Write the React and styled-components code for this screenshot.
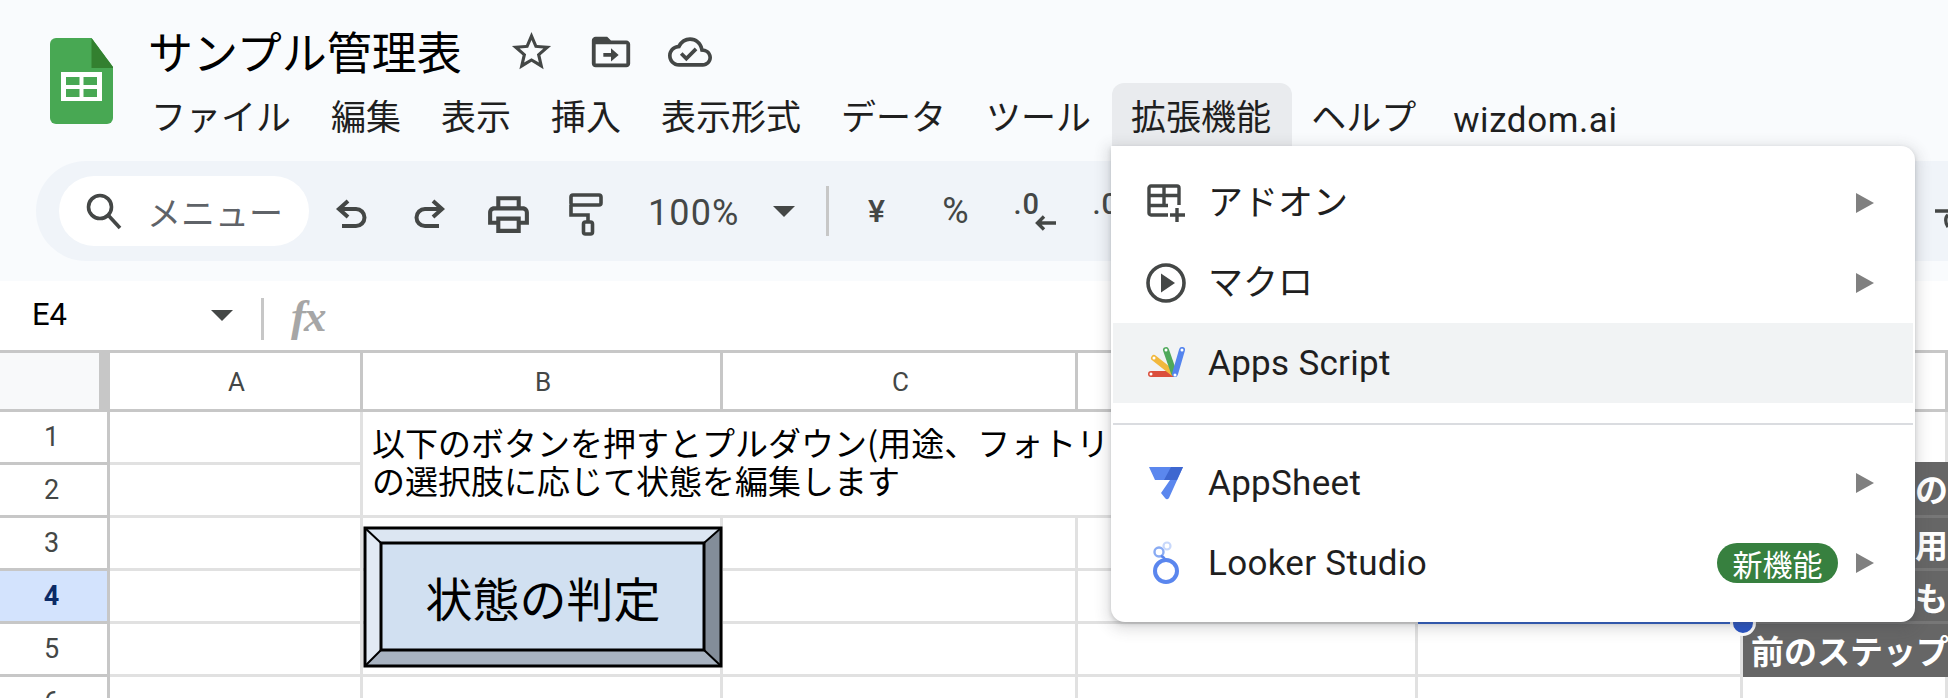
import React from 'react';
import styled, { createGlobalStyle } from 'styled-components';

const CJK = '"Noto Sans CJK JP", "Noto Sans", sans-serif';
const UI = 'Roboto, "Noto Sans CJK JP", sans-serif';
const ICON = '#444746';

const GlobalStyle = createGlobalStyle`
  html, body {
    margin: 0;
    background: #fff;
    overflow: hidden;
  }
`;

const Page = styled.div`
  position: relative;
  width: 1948px;
  height: 698px;
  overflow: hidden;
  font-family: ${CJK};
  color: #1f1f1f;
`;

const Header = styled.header`
  height: 281px;
  background: #f9fbfd;
  box-sizing: border-box;
`;

const TopBar = styled.div`
  display: flex;
  align-items: flex-start;
  height: 161px;
  padding-left: 50px;
  box-sizing: border-box;
`;

const LogoWrap = styled.div`
  margin-top: 38px;
  width: 63px;
  height: 86px;
  flex: none;
`;

const TitleColumn = styled.div`
  margin-left: 19px;
  display: flex;
  flex-direction: column;
`;

const TitleRow = styled.div`
  display: flex;
  align-items: center;
  height: 83px;
  padding: 20px 0 0 16px;
  box-sizing: border-box;
`;

const Title = styled.h1`
  margin: 0;
  font-size: 45px;
  font-weight: 400;
  line-height: 56px;
  color: #000;
  width: 360px;
  margin-top: -2px;
`;

const TitleIcon = styled.span`
  display: flex;
  width: ${(p) => p.$w}px;
  margin-top: 0;
`;

const MenuBar = styled.nav`
  display: flex;
  height: 63px;
`;

const MenuItem = styled.div`
  display: flex;
  align-items: center;
  height: 63px;
  padding: 0 21px 0 19px;
  font-size: 35px;
  line-height: 1;
  white-space: nowrap;
  border-radius: 12px 12px 0 0;
  padding-top: ${(p) => (p.$latin ? 12 : 0)}px;
  box-sizing: border-box;
  background: ${(p) => (p.$active ? '#e9ebee' : 'transparent')};
  font-family: ${(p) => (p.$latin ? UI : CJK)};
  ${(p) => p.$latin && 'font-size: 35px; letter-spacing: 0.6px; margin-left: -3px;'}
`;

const Toolbar = styled.div`
  display: flex;
  align-items: center;
  height: 100px;
  margin-left: 36px;
  padding-left: 23px;
  background: #f0f4f9;
  border-radius: 50px 0 0 50px;
  color: ${ICON};
  font-family: ${UI};
`;

const SearchPill = styled.div`
  display: flex;
  align-items: center;
  width: 250px;
  height: 70px;
  padding-left: 26px;
  gap: 24px;
  box-sizing: border-box;
  background: #fff;
  border-radius: 35px;
  font-family: ${CJK};
  font-size: 34px;
  color: #5f6368;
  margin-right: 2px;
  white-space: nowrap;
  overflow: hidden;
`;

const ToolButton = styled.div`
  display: flex;
  align-items: center;
  justify-content: center;
  flex: none;
  width: ${(p) => p.$w || 79}px;
  height: 60px;
  padding-top: ${(p) => p.$down || 0}px;
  box-sizing: border-box;
  font-size: ${(p) => p.$size || 32}px;
  font-weight: ${(p) => p.$weight || 500};
`;

const Zoom = styled.div`
  display: flex;
  align-items: center;
  flex: none;
  margin-left: 21px;
  padding-top: 4px;
  width: 125px;
  font-size: 36px;
  letter-spacing: 1.1px;
`;

const Caret = styled.span`
  flex: none;
  width: 0;
  height: 0;
  border-left: 11px solid transparent;
  border-right: 11px solid transparent;
  border-top: 11px solid ${ICON};
`;

const ToolDivider = styled.span`
  flex: none;
  width: 3px;
  height: 50px;
  background: #c7c7c7;
  margin: 0 8px 0 31px;
`;

const Decimal = styled.span`
  position: relative;
  display: block;
  width: 42px;
  height: 42px;
  font-size: 29px;
  font-weight: 500;
  line-height: 28px;
  letter-spacing: 1px;
`;

const DecimalArrow = styled.svg`
  position: absolute;
  left: 21px;
  top: 25px;
`;

const EdgeIcon = styled.span`
  display: flex;
  margin-left: auto;
  margin-top: 14px;
`;

const FormulaBar = styled.div`
  display: flex;
  align-items: center;
  height: 69px;
  padding-left: 32px;
  box-sizing: border-box;
  background: #fff;
`;

const CellName = styled.div`
  width: 179px;
  font-family: ${UI};
  font-size: 31px;
  color: #000;
  margin-top: -3px;
`;

const Divider = styled.span`
  width: 3px;
  height: 42px;
  margin: 6px 27px 0 28px;
  background: #c7c7c7;
`;

const Fx = styled.span`
  font-family: "Liberation Serif", serif;
  font-style: italic;
  font-weight: 700;
  font-size: 45px;
  line-height: 45px;
  color: #a6a6a6;
  letter-spacing: -2px;
  margin-top: 2px;
`;

const Sheet = styled.div`
  position: relative;
  display: grid;
  grid-template-columns: 110px 253px 360px 355px 340px 325px 205px;
  grid-template-rows: 62px repeat(6, 53px);
`;

const Corner = styled.div`
  background: #f8f9fa;
  border-top: 3px solid #c7c7c7;
  border-right: 11px solid #c7c7c7;
  border-bottom: 3px solid #c7c7c7;
  box-sizing: border-box;
`;

const ColHead = styled.div`
  display: flex;
  align-items: center;
  justify-content: center;
  box-sizing: border-box;
  background: #fff;
  border-top: 3px solid #c7c7c7;
  border-right: 3px solid #c7c7c7;
  border-bottom: 3px solid #c7c7c7;
  font-family: ${UI};
  font-size: 26px;
  color: ${ICON};
  padding: 2px 0 0 3px;
`;

const RowLabel = styled.div`
  display: flex;
  align-items: center;
  justify-content: center;
  box-sizing: border-box;
  padding-right: 4px;
  background: ${(p) => (p.$active ? '#d3e3fd' : '#fff')};
  color: ${(p) => (p.$active ? '#0b2a66' : ICON)};
  font-weight: ${(p) => (p.$active ? 700 : 400)};
  border-right: 3px solid #c7c7c7;
  border-bottom: 3px solid #c7c7c7;
  font-family: ${UI};
  font-size: 27px;
`;

const Cell = styled.div`
  box-sizing: border-box;
  background: #fff;
  border-right: 3px solid #e1e1e1;
  border-bottom: 3px solid #e1e1e1;
`;

const MergedCell = styled.div`
  grid-column: span 4;
  grid-row: span 2;
  box-sizing: border-box;
  padding: 11px 0 0 9px;
  background: #fff;
  border-bottom: 3px solid #e1e1e1;
  border-right: 3px solid #e1e1e1;
  font-size: 33px;
  line-height: 38px;
  color: #000;
  white-space: pre;
  overflow: hidden;
`;

const DarkCell = styled.div`
  box-sizing: border-box;
  overflow: hidden;
  background: #666;
  color: #fff;
  font-size: 33px;
  font-weight: 700;
  line-height: 52px;
  white-space: nowrap;
  text-align: ${(p) => (p.$start ? 'left' : 'right')};
  padding-left: ${(p) => (p.$start ? 8 : 0)}px;
  border-bottom: 3px solid ${(p) => (p.$last ? '#666' : '#777')};
  margin-top: ${(p) => (p.$first ? -3 : 0)}px;
`;

const SelectedCell = styled(Cell)`
  position: relative;
  border-bottom: 3px solid #2f62cf;
`;

const Handle = styled.span`
  position: absolute;
  right: -16px;
  bottom: -15px;
  width: 20px;
  height: 20px;
  border-radius: 50%;
  background: #2a55c5;
  border: 3px solid #fff;
  z-index: 2;
`;

const DrawnButton = styled.div`
  position: absolute;
  left: 363px;
  top: 176px;
  width: 360px;
  height: 142px;
  display: flex;
  align-items: center;
  justify-content: center;
  font-size: 47px;
  color: #000;
  z-index: 1;
`;

const Bevel = styled.svg`
  position: absolute;
  inset: 0;
`;

const ButtonLabel = styled.span`
  position: relative;
  top: -1px;
`;

const Dropdown = styled.div`
  position: absolute;
  left: 1111px;
  top: 146px;
  width: 804px;
  height: 476px;
  padding: 17px 2px 0;
  box-sizing: border-box;
  background: #fff;
  border-radius: 0 14px 14px 14px;
  box-shadow: 0 4px 14px 4px rgba(60, 64, 67, 0.16), 0 2px 4px rgba(60, 64, 67, 0.2);
  z-index: 3;
`;

const DropItem = styled.div`
  display: flex;
  align-items: center;
  height: 80px;
  padding-left: 33px;
  background: ${(p) => (p.$hover ? '#f1f3f4' : 'transparent')};
  font-size: 35px;
  color: #1f1f1f;
  font-family: ${UI};
  letter-spacing: 0.3px;
`;

const DropLabel = styled.span`
  font-family: ${CJK};
  font-size: 35px;
  letter-spacing: 0;
  margin-top: -7px;
`;

const DropIcon = styled.span`
  display: flex;
  justify-content: center;
  width: 40px;
  margin-right: 22px;
  flex: none;
`;

const DropDivider = styled.div`
  height: 2px;
  margin: 20px 0 18px;
  background: #dadce0;
`;

const Badge = styled.span`
  margin-left: auto;
  display: flex;
  align-items: center;
  justify-content: center;
  width: 121px;
  height: 40px;
  border-radius: 20px;
  background: #37803f;
  color: #fff;
  font-family: ${CJK};
  font-size: 30px;
  letter-spacing: 0;
`;

const Arrow = styled.span`
  margin-left: ${(p) => (p.$afterBadge ? '18px' : 'auto')};
  margin-right: 39px;
  width: 0;
  height: 0;
  flex: none;
  border-top: 10px solid transparent;
  border-bottom: 10px solid transparent;
  border-left: 18px solid #808080;
`;

const Path = ({ d, size, view = 24 }) => (
  <svg width={size} height={size} viewBox={`0 0 ${view} ${view}`} fill={ICON}>
    <path d={d} />
  </svg>
);

const SheetsLogo = () => (
  <svg width="63" height="86" viewBox="0 0 63 86">
    <path d="M6 0H41.5L63 29V80a6 6 0 0 1-6 6H6a6 6 0 0 1-6-6V6a6 6 0 0 1 6-6z" fill="#48a853" />
    <path d="M41.5 0L63 29V30H41.5z" fill="#33802f" />
    <rect x="11" y="34" width="41" height="29" fill="#fff" />
    <rect x="16" y="39" width="13.5" height="8" fill="#48a853" />
    <rect x="33.5" y="39" width="13.5" height="8" fill="#48a853" />
    <rect x="16" y="51" width="13.5" height="8" fill="#48a853" />
    <rect x="33.5" y="51" width="13.5" height="8" fill="#48a853" />
  </svg>
);

const HookArrow = ({ flip }) => (
  <svg width="32" height="30" viewBox="0 0 32 30" fill="none" stroke={ICON} strokeWidth="4" style={flip ? { transform: 'scaleX(-1)' } : undefined}>
    <path d="M13 2L4 10l9 8" />
    <path d="M4 10H21a8 8 0 0 1 0 17H7" />
  </svg>
);

const PaintRoller = () => (
  <svg width="36" height="44" viewBox="0 0 36 44" fill="none" stroke={ICON} strokeWidth="3.6" style={{ marginLeft: -3 }}>
    <rect x="3" y="3" width="30" height="10" rx="2" />
    <path d="M3 13v10h17v7" />
    <rect x="15.5" y="30" width="9" height="12" rx="2" />
  </svg>
);

const SearchIcon = () => (
  <svg width="38" height="38" viewBox="0 0 38 38" fill="none" stroke={ICON} strokeWidth="3.6" style={{ flex: 'none' }}>
    <circle cx="15" cy="15" r="11.5" />
    <path d="M23 23l12 13" />
  </svg>
);

const AddonIcon = () => (
  <svg width="40" height="38" viewBox="0 0 40 38" fill="none" stroke={ICON} strokeWidth="3.4">
    <path d="M22 31H5a2 2 0 0 1-2-2V4a2 2 0 0 1 2-2h26a2 2 0 0 1 2 2v17" />
    <path d="M3 11.5H33M3 21.5H22M18 2V21" />
    <path d="M31 24V38M24 31H39" />
  </svg>
);

const MacroIcon = () => (
  <svg width="40" height="40" viewBox="0 0 40 40">
    <circle cx="20" cy="20" r="18" fill="none" stroke={ICON} strokeWidth="3.6" />
    <path d="M15 10.5L29 20 15 29.5z" fill={ICON} />
  </svg>
);

// Apps Script fan, one capsule per colour
const APPS_BLADES = [
  { x1: 5, y1: 29, x2: 27, y2: 29, color: '#db4f3c' },
  { x1: 8, y1: 13, x2: 27, y2: 28, color: '#f2b83c' },
  { x1: 20, y1: 5, x2: 28, y2: 28, color: '#4fa95b' },
  { x1: 36, y1: 5, x2: 29, y2: 29, color: '#5484ee' },
];

const AppsScriptIcon = () => (
  <svg width="40" height="36" viewBox="0 0 40 36" strokeLinecap="round" strokeWidth="6">
    {APPS_BLADES.map((b) => (
      <g key={b.color}>
        <line x1={b.x1} y1={b.y1} x2={b.x2} y2={b.y2} stroke={b.color} />
        <circle cx={b.x1} cy={b.y1} r="1.5" fill="#fff" />
      </g>
    ))}
    <circle cx="29" cy="30" r="1.5" fill="#fff" />
  </svg>
);

const AppSheetIcon = () => (
  <svg width="36" height="34" viewBox="0 0 36 34">
    <path d="M1 1H35L21 32q-2 2.500-4 0l-4-5L22 14H7z" fill="#5b87ee" />
    <path d="M23 1H35L29 14H16z" fill="#3e67d0" />
  </svg>
);

const LookerIcon = () => (
  <svg width="36" height="44" viewBox="0 0 36 44" fill="none">
    <circle cx="18" cy="30" r="11" stroke="#5a86ee" strokeWidth="4" />
    <circle cx="11" cy="11" r="4.500" stroke="#89abf3" strokeWidth="2.400" />
    <circle cx="19" cy="5" r="3.500" stroke="#c8d8fb" strokeWidth="2.200" />
    <path d="M13 15c3 1 4 3 4 5" stroke="#5a86ee" strokeWidth="2.400" />
  </svg>
);

const STAR = 'M22 9.24l-7.19-.62L12 2 9.19 8.63 2 9.24l5.46 4.73L5.82 21 12 17.27 18.18 21l-1.63-7.03L22 9.24zM12 15.4l-3.76 2.27 1-4.28-3.32-2.88 4.38-.38L12 6.1l1.71 4.04 4.38.38-3.32 2.88 1 4.28L12 15.4z';
const FOLDER = 'M20 6h-8l-2-2H4c-1.100 0-1.990.9-1.990 2L2 18c0 1.100.9 2 2 2h16c1.100 0 2-.9 2-2V8c0-1.100-.9-2-2-2zm0 12H4V8h16v10zm-8-3.500H8v-2h4V10l4 3.500-4 3.500v-2.500z';
const CLOUD = 'M19.35 10.04C18.67 6.59 15.64 4 12 4 9.11 4 6.6 5.64 5.35 8.04 2.34 8.36 0 10.91 0 14c0 3.31 2.69 6 6 6h13c2.76 0 5-2.24 5-5 0-2.64-2.05-4.78-4.65-4.96zM19 18H6c-2.21 0-4-1.790-4-4 0-2.050 1.530-3.760 3.560-3.970l1.070-.11.5-.95C8.080 7.140 9.940 6 12 6c2.620 0 4.880 1.860 5.390 4.430l.3 1.500 1.530.11c1.560.1 2.780 1.410 2.780 2.960 0 1.650-1.350 3-3 3zm-9-3.820l-2.090-2.090L6.500 13.500 10 17l6.010-6.010-1.410-1.410z';
const PRINT = 'M19 8h-1V3H6v5H5c-1.660 0-3 1.340-3 3v6h4v4h12v-4h4v-6c0-1.660-1.340-3-3-3zM8 5h8v3H8V5zm8 12v2H8v-4h8v2zm2-2v-2H6v2H4v-4c0-.55.45-1 1-1h14c.55 0 1 .45 1 1v4h-2z';

const MENU = ['ファイル', '編集', '表示', '挿入', '表示形式', 'データ', 'ツール'];

const COLUMNS = ['A', 'B', 'C', 'D', 'E', 'F'];

const App = () => (
  <Page>
    <GlobalStyle />
    <Header>
      <TopBar>
        <LogoWrap>
          <SheetsLogo />
        </LogoWrap>
        <TitleColumn>
          <TitleRow>
            <Title>サンプル管理表</Title>
            <TitleIcon $w={80}>
              <Path d={STAR} size={47} />
            </TitleIcon>
            <TitleIcon $w={80}>
              <Path d={FOLDER} size={46} />
            </TitleIcon>
            <TitleIcon $w={50}>
              <Path d={CLOUD} size={44} />
            </TitleIcon>
          </TitleRow>
          <MenuBar>
            {MENU.map((m) => (
              <MenuItem key={m}>{m}</MenuItem>
            ))}
            <MenuItem $active>拡張機能</MenuItem>
            <MenuItem>ヘルプ</MenuItem>
            <MenuItem $latin>wizdom.ai</MenuItem>
          </MenuBar>
        </TitleColumn>
      </TopBar>
      <Toolbar>
        <SearchPill>
          <SearchIcon />
          メニュー
        </SearchPill>
        <ToolButton $down={6}>
          <HookArrow />
        </ToolButton>
        <ToolButton $down={6}>
          <HookArrow flip />
        </ToolButton>
        <ToolButton $down={6}>
          <Path d={PRINT} size={49} />
        </ToolButton>
        <ToolButton $down={6}>
          <PaintRoller />
        </ToolButton>
        <Zoom>100%</Zoom>
        <Caret />
        <ToolDivider />
        <ToolButton>¥</ToolButton>
        <ToolButton $weight={400} $size={36}>%</ToolButton>
        <ToolButton>
          <Decimal>
            .0
            <DecimalArrow width="22" height="16" viewBox="0 0 22 16" fill="none" stroke={ICON} strokeWidth="3.400">
              <path d="M9 1.500L2.500 8 9 14.500M3 8H21" />
            </DecimalArrow>
          </Decimal>
        </ToolButton>
        <ToolButton>
          <Decimal>.0</Decimal>
        </ToolButton>
        <EdgeIcon>
          <svg width="13" height="26" viewBox="0 0 13 26" fill="none" stroke={ICON} strokeWidth="3.400">
            <path d="M0 6H13M13 10c-3 2-3 8 0 12" />
          </svg>
        </EdgeIcon>
      </Toolbar>
    </Header>
    <FormulaBar>
      <CellName>E4</CellName>
      <Caret />
      <Divider />
      <Fx>fx</Fx>
    </FormulaBar>
    <Sheet>
      <Corner />
      {COLUMNS.map((c) => (
        <ColHead key={c}>{c}</ColHead>
      ))}

      <RowLabel>1</RowLabel>
      <Cell />
      <MergedCell>{'以下のボタンを押すとプルダウン(用途、フォトリ\nの選択肢に応じて状態を編集します'}</MergedCell>
      <Cell />

      <RowLabel>2</RowLabel>
      <Cell />
      <DarkCell $first>の</DarkCell>

      <RowLabel>3</RowLabel>
      <Cell />
      <Cell />
      <Cell />
      <Cell />
      <Cell />
      <DarkCell>用</DarkCell>

      <RowLabel $active>4</RowLabel>
      <Cell />
      <Cell />
      <Cell />
      <Cell />
      <SelectedCell>
        <Handle />
      </SelectedCell>
      <DarkCell>も</DarkCell>

      <RowLabel>5</RowLabel>
      <Cell />
      <Cell />
      <Cell />
      <Cell />
      <Cell />
      <DarkCell $start $last>前のステップ</DarkCell>

      <RowLabel>6</RowLabel>
      <Cell />
      <Cell />
      <Cell />
      <Cell />
      <Cell />
      <Cell />

      <DrawnButton>
        <Bevel width="360" height="142" viewBox="0 0 360 142">
          <rect x="2" y="2" width="356" height="138" fill="#d1e0f1" />
          <path d="M2 2H358L340 17H18z" fill="#dce6f2" />
          <path d="M2 2L18 17V124L2 140z" fill="#e2eaf4" />
          <path d="M358 2L341 17V124L358 140z" fill="#838d99" />
          <path d="M2 140L18 124H341L358 140z" fill="#a8b3c1" />
          <g fill="none" stroke="#000" strokeWidth="3">
            <rect x="2" y="2" width="356" height="138" />
            <rect x="18" y="17" width="323" height="107" />
            <path d="M2 2L18 17M358 2L341 17M2 140L18 124M358 140L341 124" strokeWidth="2" />
          </g>
        </Bevel>
        <ButtonLabel>状態の判定</ButtonLabel>
      </DrawnButton>
    </Sheet>

    <Dropdown>
      <DropItem>
        <DropIcon>
          <AddonIcon />
        </DropIcon>
        <DropLabel>アドオン</DropLabel>
        <Arrow />
      </DropItem>
      <DropItem>
        <DropIcon>
          <MacroIcon />
        </DropIcon>
        <DropLabel>マクロ</DropLabel>
        <Arrow />
      </DropItem>
      <DropItem $hover>
        <DropIcon>
          <AppsScriptIcon />
        </DropIcon>
        Apps Script
      </DropItem>
      <DropDivider />
      <DropItem>
        <DropIcon>
          <AppSheetIcon />
        </DropIcon>
        AppSheet
        <Arrow />
      </DropItem>
      <DropItem>
        <DropIcon>
          <LookerIcon />
        </DropIcon>
        Looker Studio
        <Badge>新機能</Badge>
        <Arrow $afterBadge />
      </DropItem>
    </Dropdown>
  </Page>
);

export default App;
